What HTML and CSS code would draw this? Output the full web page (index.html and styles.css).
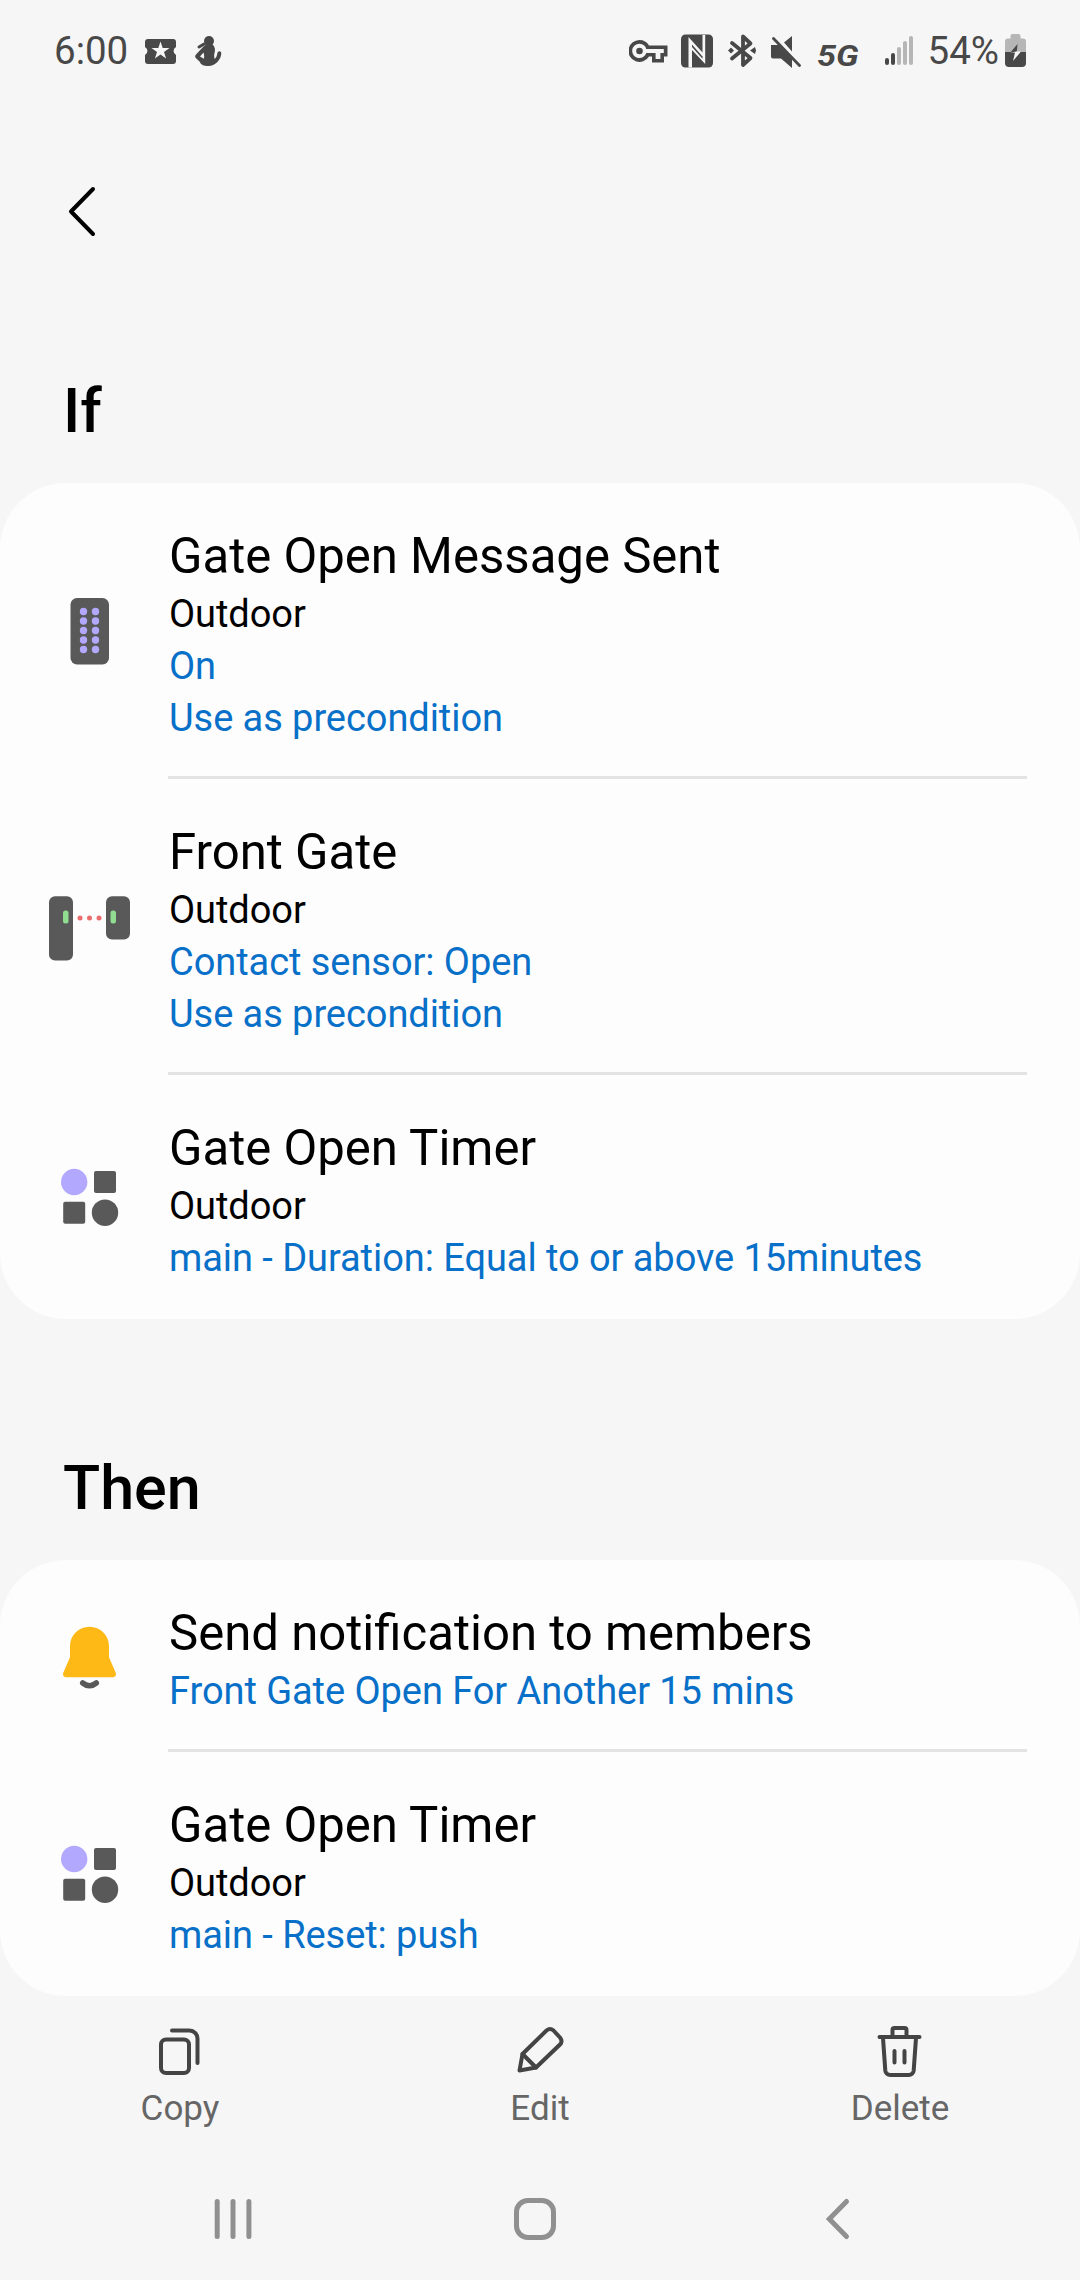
FILE: index.html
```html
<!DOCTYPE html>
<html lang="en">
<head>
    <meta charset="UTF-8">
    <meta name="viewport" content="width=device-width, initial-scale=1.0">
    <title>Routine</title>
    <link rel="stylesheet" href="styles.css">
</head>
<body>

    <!-- Status bar -->
    <div class="status-bar">
        <span class="status-text">6:00</span>
        <svg class="ticket" width="32" height="36" viewBox="0 0 32 36">
            <path fill="#484848" d="M3 6h25a3 3 0 0 1 3 3v5a4.500 4.500 0 0 0 0 8v6a3 3 0 0 1-3 3H3a3 3 0 0 1-3-3v-6a4.500 4.500 0 0 0 0-8v-5a3 3 0 0 1 3-3z"/>
            <path fill="#f6f6f6" d="M15.500 8.500l2.200 6.500h6.800l-5.500 4 2.100 6.500-5.600-4-5.600 4 2.100-6.500-5.500-4h6.800z"/>
        </svg>
        <svg class="person" width="27" height="36" viewBox="0 0 27 36">
            <circle cx="14" cy="8" r="5" fill="#484848"/>
            <path d="M4 14l5-3" stroke="#484848" stroke-width="3" stroke-linecap="round"/>
            <path fill="#484848" fill-rule="evenodd" d="M11.500 11h5.500c3 2.500 3.500 5.500 2.500 9-.6 2.500-.4 4.500.3 6 1.500-1.500 2-3 2.500-5.500 .4-3 4.200-3 4 0-.4 6.500-6.300 12.500-12.800 12.500-5 0-8-1.500-8.500-4L.8 25c-1-1.200-.8-2.200.2-3.400l7-7.600zM8.500 19.500l-3.500 4 3.800 2.300c.6-2 .5-4-.3-6.300z"/>
        </svg>

        <div class="status-right">
            <svg width="39" height="36" viewBox="0 0 39 36">
                <path fill="#484848" fill-rule="evenodd" d="M10.500 7a11 11 0 0 1 9.500 5.500h18.500v11h-3.500v6H23v-6h-3A11 11 0 1 1 10.500 7zM10.500 10.700a7.200 7.200 0 1 0 6.800 9.200h9.300v6h4.800v-6h3.400v-3.800H17.300a7.200 7.200 0 0 0-6.800-5.400z"/>
                <circle cx="10.500" cy="18" r="3.300" fill="#484848"/>
            </svg>
            <svg class="nfc" width="32" height="36" viewBox="0 0 32 36">
                <rect x="0" y="1.500" width="32" height="33" rx="4.500" fill="#484848"/>
                <path fill="#f6f6f6" d="M7.500 4l14 15.500V2h2.700v29L11 17v17.500H7.500z"/>
                <path fill="#484848" d="M11 11.500l10.500 12v2.200L11 14z"/>
            </svg>
            <svg class="bluetooth" width="28" height="36" viewBox="0 0 28 36">
                <path d="M4 10l18.500 15-7.500 7V3.500l7.500 7L4 25.500" fill="none" stroke="#484848" stroke-width="3.800" stroke-linejoin="round" stroke-linecap="round"/>
                <path d="M0 17.500l3-3 3 3-3 3zM22 17.500l5-3.500 1 3.500-1 3.500z" fill="#484848"/>
            </svg>
            <svg class="mute" width="30" height="36" viewBox="0 0 30 36">
                <path d="M0 12h7.500L21 26v9l-11-9.500H2a2 2 0 0 1-2-2zM13 9.500L21 3v15.500z" fill="#484848"/>
                <path d="M2.500 5.500l26 27" stroke="#484848" stroke-width="2.800" stroke-linecap="round"/>
            </svg>
            <span class="network">5G</span>
            <svg class="signal" width="28" height="36" viewBox="0 0 28 36">
                <g fill="#484848">
                    <rect x="0" y="25" width="4" height="7" rx="2"/>
                    <rect x="6" y="20" width="4" height="12" rx="2"/>
                </g>
                <g fill="#b6b6b6">
                    <rect x="12" y="14" width="4" height="18" rx="2"/>
                    <rect x="18" y="8" width="4" height="24" rx="2"/>
                    <rect x="24" y="3" width="4" height="29" rx="2"/>
                </g>
            </svg>
            <span class="status-text battery-text">54%</span>
            <svg class="battery" width="21" height="36" viewBox="0 0 21 36">
                <path fill="#b6b6b6" d="M7.500 1h6a2 2 0 0 1 2 2v2.500H18a3 3 0 0 1 3 3V19H0V8.500a3 3 0 0 1 3-3h2.500V3a2 2 0 0 1 2-2z"/>
                <path fill="#484848" d="M0 19h21v11a4 4 0 0 1-4 4H4a4 4 0 0 1-4-4z"/>
                <path fill="#484848" d="M12.500 11L5 20h6l1-3z"/>
                <path fill="#f6f6f6" d="M5 19.500h5L8 28l8-9.500h-4z"/>
            </svg>
        </div>
    </div>

    <div class="toolbar">
        <svg width="48" height="60" viewBox="0 0 48 60">
            <path d="M33 7L11 29.500 33 52" fill="none" stroke="#000" stroke-width="4" stroke-linecap="round" stroke-linejoin="round"/>
        </svg>
    </div>

    <h2>If</h2>
    <div class="card">
        <div class="row">
            <svg class="icon" viewBox="0 0 84 84">
                <rect x="22.500" y="9" width="38.500" height="66.500" rx="6.500" fill="#595959"/>
                <g fill="#b2a8fd">
                    <circle cx="35.500" cy="22.500" r="3.700"/><circle cx="47.500" cy="22.500" r="3.700"/>
                    <circle cx="35.500" cy="32" r="3.700"/><circle cx="47.500" cy="32" r="3.700"/>
                    <circle cx="35.500" cy="41.500" r="3.700"/><circle cx="47.500" cy="41.500" r="3.700"/>
                    <circle cx="35.500" cy="51" r="3.700"/><circle cx="47.500" cy="51" r="3.700"/>
                    <circle cx="35.500" cy="60.500" r="3.700"/><circle cx="47.500" cy="60.500" r="3.700"/>
                </g>
            </svg>
            <div class="info">
                <div class="title">Gate Open Message Sent</div>
                <div class="sub">Outdoor</div>
                <div class="sub link">On</div>
                <div class="sub link">Use as precondition</div>
            </div>
        </div>
        <div class="row">
            <svg class="icon" viewBox="0 0 84 84">
                <rect x="1" y="11.300" width="24" height="64.200" rx="6" fill="#595959"/>
                <rect x="58" y="11.300" width="24" height="43.200" rx="6" fill="#595959"/>
                <rect x="15" y="25.500" width="5.500" height="13" rx="2.500" fill="#90dd91"/>
                <rect x="62.500" y="25.500" width="5.500" height="13" rx="2.500" fill="#90dd91"/>
                <g fill="#ea6c6c">
                    <circle cx="32" cy="33" r="2.500"/><circle cx="41.500" cy="33" r="2.500"/><circle cx="51" cy="33" r="2.500"/>
                </g>
            </svg>
            <div class="info">
                <div class="title">Front Gate</div>
                <div class="sub">Outdoor</div>
                <div class="sub link">Contact sensor: Open</div>
                <div class="sub link">Use as precondition</div>
            </div>
        </div>
        <div class="row">
            <svg class="icon" viewBox="0 0 84 84">
                <circle cx="26.200" cy="27" r="13.200" fill="#b2a8fd"/>
                <rect x="46" y="16" width="22" height="22" rx="2" fill="#595959"/>
                <rect x="15.200" y="46.700" width="22" height="22" rx="2" fill="#595959"/>
                <circle cx="57" cy="57.700" r="13.200" fill="#595959"/>
            </svg>
            <div class="info">
                <div class="title">Gate Open Timer</div>
                <div class="sub">Outdoor</div>
                <div class="sub link">main - Duration: Equal to or above 15minutes</div>
            </div>
        </div>
    </div>

    <h2 class="then">Then</h2>
    <div class="card">
        <div class="row">
            <svg class="icon" viewBox="0 0 84 84">
                <path fill="#ffb916" d="M41.500 12.700c-11 0-19.500 8.500-19.500 19.500v11l-6.500 15c-1.200 2.800 0 5 3 5h46c3 0 4.200-2.200 3-5l-6.500-15v-11c0-11-8.500-19.500-19.500-19.500z"/>
                <path d="M34.700 69q6.800 5.500 13.600 0" fill="none" stroke="#595959" stroke-width="5.500" stroke-linecap="round"/>
            </svg>
            <div class="info">
                <div class="title">Send notification to members</div>
                <div class="sub link">Front Gate Open For Another 15 mins</div>
            </div>
        </div>
        <div class="row">
            <svg class="icon" viewBox="0 0 84 84">
                <circle cx="26.200" cy="27" r="13.200" fill="#b2a8fd"/>
                <rect x="46" y="16" width="22" height="22" rx="2" fill="#595959"/>
                <rect x="15.200" y="46.700" width="22" height="22" rx="2" fill="#595959"/>
                <circle cx="57" cy="57.700" r="13.200" fill="#595959"/>
            </svg>
            <div class="info">
                <div class="title">Gate Open Timer</div>
                <div class="sub">Outdoor</div>
                <div class="sub link">main - Reset: push</div>
            </div>
        </div>
    </div>

    <!-- Bottom actions -->
    <div class="actions">
        <div class="action">
            <svg width="60" height="60" viewBox="0 0 60 60" fill="none" stroke="#444" stroke-width="4" stroke-linecap="round" stroke-linejoin="round">
                <rect x="11" y="17.500" width="28" height="33.500" rx="5"/>
                <path d="M22 8.500h17.500a8 8 0 0 1 8 8V41"/>
            </svg>
            <span>Copy</span>
        </div>
        <div class="action">
            <svg width="60" height="60" viewBox="0 0 60 60" fill="none" stroke="#444" stroke-width="4" stroke-linecap="round" stroke-linejoin="round">
                <path d="M12.500 32L36.500 8.500q3.500-3 7 0l6.500 7q3 4 0 7L26 45.500 9.500 48.500z"/>
                <path d="M12.500 32L26 45.500"/>
            </svg>
            <span>Edit</span>
        </div>
        <div class="action">
            <svg width="60" height="60" viewBox="0 0 60 60" fill="none" stroke="#444" stroke-width="4" stroke-linecap="round" stroke-linejoin="round">
                <path d="M9.500 15h40M22.500 15V8a2 2 0 0 1 2-2h10a2 2 0 0 1 2 2v7M13 16l2.300 32.500a5 5 0 0 0 5 4.500h18.400a5 5 0 0 0 5-4.500L46 16M24.500 29v11.500M34.500 29v11.500"/>
            </svg>
            <span>Delete</span>
        </div>
    </div>

    <!-- System navigation -->
    <div class="nav">
        <svg width="60" height="60" viewBox="0 0 60 60" stroke="#909090" stroke-width="5" stroke-linecap="round">
            <path d="M14.200 12.500v35M30 12.500v35M45.900 12.500v35"/>
        </svg>
        <svg width="60" height="60" viewBox="0 0 60 60">
            <rect x="11.500" y="11.500" width="37" height="37" rx="11.500" fill="none" stroke="#909090" stroke-width="5"/>
        </svg>
        <svg width="60" height="60" viewBox="0 0 60 60">
            <path d="M39.500 12.500L22.300 30l17.200 17.500" fill="none" stroke="#909090" stroke-width="5" stroke-linecap="round"/>
        </svg>
    </div>

</body>
</html>
```
FILE: styles.css
```css
* {
    box-sizing: border-box;
}
body {
    margin: 0;
    width: 1080px;
    height: 2280px;
    overflow: hidden;
    font-family: Roboto, sans-serif;
    background-color: #f6f6f6;
    color: #000;
}
svg {
    display: block;
    flex: none;
}

/* Status bar */
.status-bar {
    display: flex;
    align-items: center;
    height: 102px;
    padding: 0 54px;
    color: #484848;
}
.status-text {
    font-size: 38.5px;
    line-height: 44px;
}
.ticket {
    margin-left: 17px;
}
.person {
    margin-left: 18px;
}
.status-right {
    display: flex;
    align-items: center;
    margin-left: auto;
}
.nfc {
    margin-left: 13px;
}
.bluetooth {
    margin-left: 15px;
}
.mute {
    margin-left: 15px;
}
.network {
    width: 42px;
    margin-left: 16px;
    padding-top: 9px;
    font-size: 29px;
    line-height: 34px;
    font-weight: bold;
    font-style: italic;
    transform: scaleX(1.18);
    transform-origin: left;
}
.signal {
    margin-left: 26px;
}
.battery-text {
    margin-left: 15px;
}
.battery {
    margin-left: 6px;
}

.toolbar {
    display: flex;
    align-items: center;
    height: 220px;
    padding: 0 60px;
}

h2 {
    margin: 49px 0 32px;
    padding-left: 63px;
    font-size: 61px;
    line-height: 80px;
    font-weight: 500;
}
h2.then {
    margin-top: 129px;
}

/* Condition and action lists */
.card {
    background-color: #fdfdfd;
    border-radius: 66px;
}
.row {
    display: flex;
    align-items: center;
    padding-left: 48px;
    padding-right: 53px;
}
.icon {
    width: 84px;
    height: 84px;
    margin-right: 36px;
}
.info {
    flex: 1;
    padding: 41px 0 32px 1px;
    border-bottom: 3px solid #e3e3e3;
}
.row:last-child .info {
    border-bottom-color: transparent;
}
.title {
    font-size: 49.1px;
    line-height: 64px;
}
.sub {
    font-size: 38px;
    line-height: 52px;
    letter-spacing: -0.06px;
}
.link {
    color: #0870c8;
}

.actions {
    display: flex;
    height: 164px;
    padding-top: 26px;
}
.action {
    flex: 1;
    display: flex;
    flex-direction: column;
    align-items: center;
    gap: 5px;
    font-size: 35px;
    line-height: 44px;
    color: #666;
}

.nav {
    display: flex;
    gap: 242px;
    padding: 29px 0 0 203px;
}
```
